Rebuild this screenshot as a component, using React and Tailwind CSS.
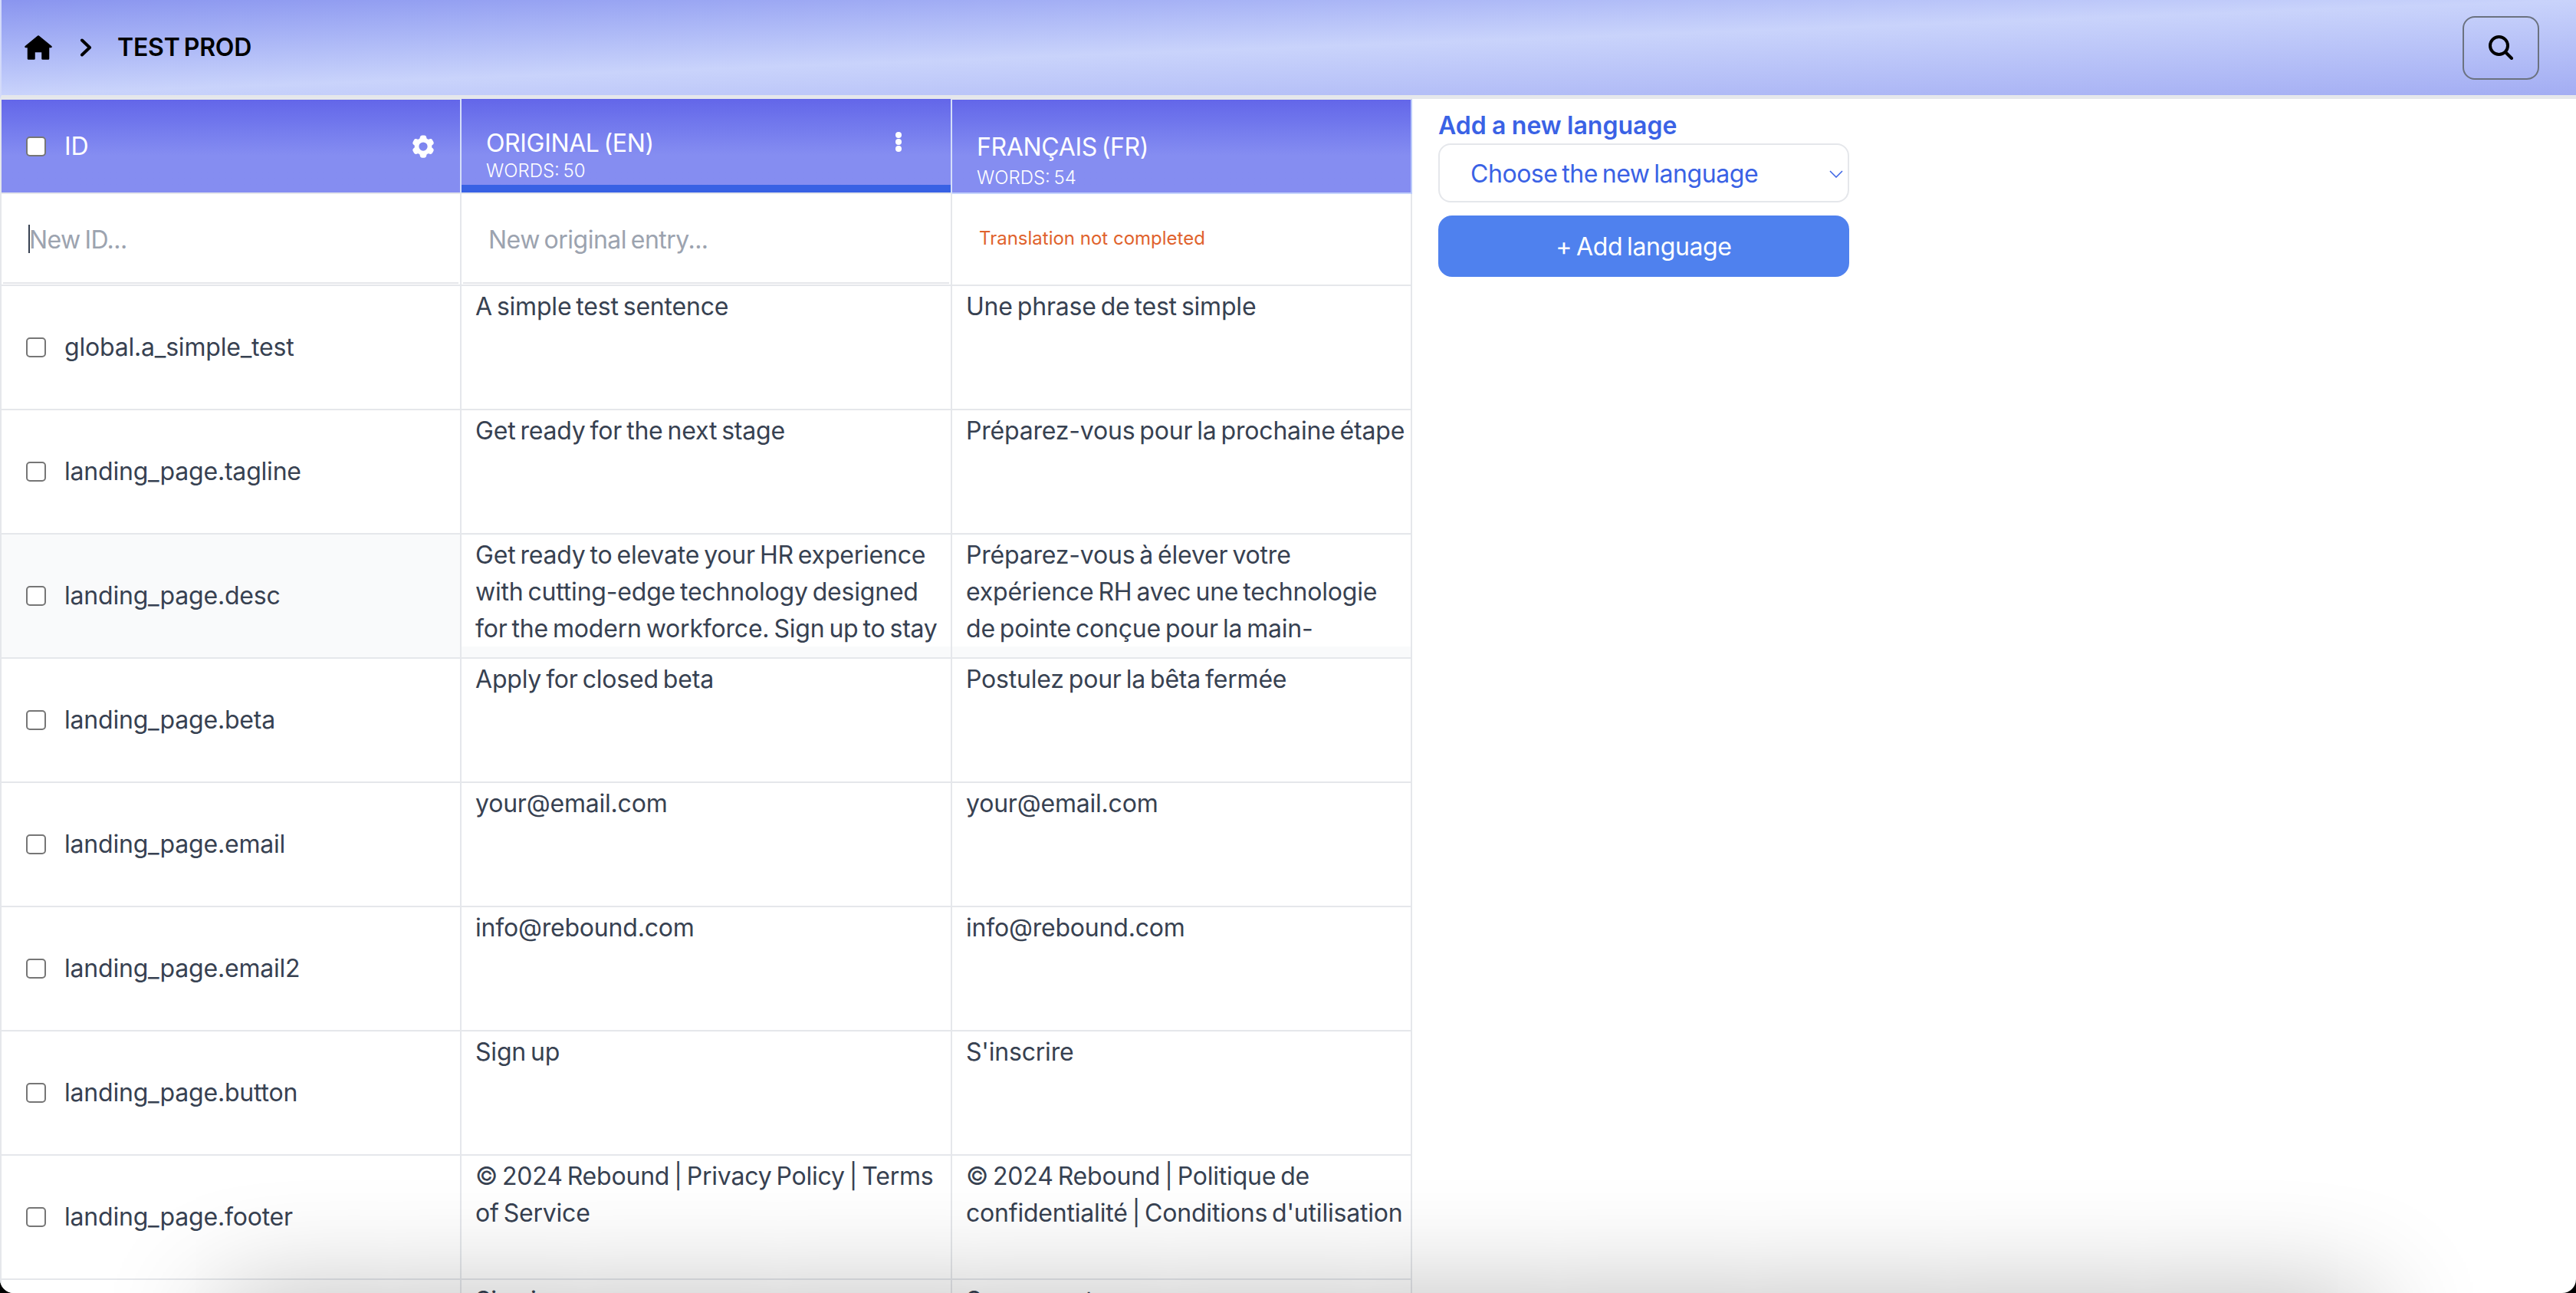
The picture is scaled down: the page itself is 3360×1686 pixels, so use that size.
import { HiCog6Tooth } from 'react-icons/hi2'

const rows = [
  { id: 'global.a_simple_test', en: 'A simple test sentence', fr: 'Une phrase de test simple' },
  { id: 'landing_page.tagline', en: 'Get ready for the next stage', fr: 'Préparez-vous pour la prochaine étape' },
  {
    id: 'landing_page.desc',
    en: 'Get ready to elevate your HR experience with cutting-edge technology designed for the modern workforce. Sign up to stay',
    fr: "Préparez-vous à élever votre expérience RH avec une technologie de pointe conçue pour la main-",
    hover: true,
  },
  { id: 'landing_page.beta', en: 'Apply for closed beta', fr: 'Postulez pour la bêta fermée' },
  { id: 'landing_page.email', en: 'your@email.com', fr: 'your@email.com' },
  { id: 'landing_page.email2', en: 'info@rebound.com', fr: 'info@rebound.com' },
  { id: 'landing_page.button', en: 'Sign up', fr: "S'inscrire" },
  {
    id: 'landing_page.footer',
    en: '© 2024 Rebound | Privacy Policy | Terms of Service',
    fr: "© 2024 Rebound | Politique de confidentialité | Conditions d'utilisation",
  },
  { id: 'landing_page.signin', en: 'Sign in', fr: 'Se connecter' },
]

function Checkbox() {
  return (
    <input
      type="checkbox"
      className="h-[26px] w-[26px] shrink-0 appearance-none rounded-[5px] border-2 border-[#767676] bg-white"
    />
  )
}

function HomeIcon() {
  return (
    <svg width="36" height="32" viewBox="0 0 36 32" aria-hidden>
      <path
        d="M18 1.5 L34.5 15 H31 V30.5 H23.5 V22 Q23.5 21 22.5 21 H13.5 Q12.5 21 12.5 22 V30.5 H5 V15 H1.5 Z"
        fill="#000"
        stroke="#000"
        strokeWidth="2.5"
        strokeLinejoin="round"
      />
    </svg>
  )
}

function Row({ row }) {
  return (
    <div
      className={`grid h-[162px] grid-cols-[600px_640px_600px] border-b-2 border-[#e5e7eb] text-[32px] leading-[48px] text-[#374151] ${
        row.hover ? 'bg-[#f9fafb]' : 'bg-white'
      }`}
    >
      <div className="flex items-center gap-[24px] border-r-2 border-[#e5e7eb] pl-[32px]">
        <Checkbox />
        <span>{row.id}</span>
      </div>
      <div className="border-r-2 border-[#e5e7eb]">
        <div className="mt-[1px] h-[145px] overflow-hidden bg-white pt-[2px] pr-[14px] pl-[18px]">{row.en}</div>
      </div>
      <div className="border-r-2 border-[#e5e7eb]">
        <div className="mt-[1px] h-[145px] overflow-hidden bg-white pt-[2px] pr-[4px] pl-[18px]">{row.fr}</div>
      </div>
    </div>
  )
}

export default function App() {
  return (
    <div className="h-[1686px] w-[3360px] bg-black font-[Inter,sans-serif] tracking-[-0.2px] [word-spacing:-2.8px]">
      <div className="relative h-full w-full overflow-hidden rounded-b-[18px] bg-white">
        <header className="flex h-[129px] items-center justify-between border-b-[5px] border-l-2 border-[#e5e7eb] border-l-[#d3daf9] bg-linear-to-br from-[#8a95ef] via-[#c9d3fb] to-[#a3adf3] pr-[48px] pl-[30px]">
          <div className="flex items-center">
            <HomeIcon />
            <svg width="16" height="24" viewBox="0 0 16 24" className="ml-[36px]" aria-hidden>
              <polyline
                points="3,2.5 13,12 3,21.5"
                fill="none"
                stroke="#000"
                strokeWidth="4"
                strokeLinecap="round"
                strokeLinejoin="round"
              />
            </svg>
            <span className="ml-[33px] text-[32px] leading-[48px] font-semibold text-black">TEST PROD</span>
          </div>
          <button
            type="button"
            className="flex h-[83px] w-[100px] items-center justify-center rounded-[16px] border-2 border-[#6b7280]"
          >
            <svg width="32" height="32" viewBox="0 0 32 32" aria-hidden>
              <circle cx="13.5" cy="13.5" r="11.5" fill="none" stroke="#000" strokeWidth="4" />
              <line x1="22" y1="22" x2="30" y2="30" stroke="#000" strokeWidth="4" strokeLinecap="round" />
            </svg>
          </button>
        </header>

        <div className="flex">
          <div className="w-[1842px] shrink-0 border-l-2 border-[#e5e7eb]">
            <div className="grid h-[124px] grid-cols-[600px_640px_600px] bg-white">
              <div className="flex items-center border-t border-r-2 border-b-2 border-[#e5e7eb] border-r-[#d5def9] bg-linear-to-b from-[#6366e9] to-[#858df1] to-60% pr-[30px] pl-[32px] text-white">
                <Checkbox />
                <span className="ml-[24px] text-[32px] leading-[48px]">ID</span>
                <HiCog6Tooth className="ml-auto text-[36px]" />
              </div>
              <div className="relative border-r-2 border-b-2 border-[#e5e7eb] border-r-[#d5def9] bg-linear-to-b from-[#6366e9] to-[#858df1] to-60% pt-[38px] pl-[32px] text-white">
                <div className="text-[32px] leading-[40px] tracking-[-0.35px]">ORIGINAL (EN)</div>
                <div className="text-[24px] leading-[32px] font-light tracking-normal [word-spacing:-2px]">WORDS: 50</div>
                <svg
                  width="8"
                  height="26"
                  viewBox="0 0 8 26"
                  className="absolute top-[43px] right-[64px]"
                  fill="#fff"
                  aria-hidden
                >
                  <circle cx="4" cy="4" r="4" />
                  <circle cx="4" cy="13" r="4" />
                  <circle cx="4" cy="22" r="4" />
                </svg>
                <div className="absolute right-0 bottom-0 left-0 h-[10px] bg-[#3861e4]" />
              </div>
              <div className="border-t border-r-2 border-b-2 border-[#e5e7eb] border-r-[#b9c9fa] border-b-[#c5d3fb] bg-linear-to-b from-[#6366e9] to-[#858df1] to-60% pt-[42px] pl-[32px] text-white">
                <div className="text-[32px] leading-[40px] tracking-[-0.35px]">FRANÇAIS (FR)</div>
                <div className="mt-[4px] text-[24px] leading-[32px] font-light tracking-normal [word-spacing:-2px]">WORDS: 54</div>
              </div>
            </div>

            <div className="grid h-[120px] grid-cols-[600px_640px_600px] border-b-2 border-[#e5e7eb] bg-white text-[32px]">
              <div className="relative border-r-2 border-[#e5e7eb] px-[2px]">
                <input
                  placeholder="New ID..."
                  className="h-[117px] w-full border-b-2 border-[#e5e7eb] bg-white pt-[4px] pl-[34px] leading-[48px] tracking-[-0.55px] [word-spacing:-2.8px] outline-none placeholder:text-[#9ca3af]"
                />
                <div className="absolute top-[40px] left-[35px] h-[37px] w-[2px] bg-[#374151]" />
              </div>
              <div className="border-r-2 border-[#e5e7eb] px-[2px]">
                <input
                  placeholder="New original entry..."
                  className="h-[117px] w-full border-b-2 border-[#e5e7eb] bg-white pt-[4px] pl-[33px] leading-[48px] tracking-[-0.5px] [word-spacing:-2.8px] outline-none placeholder:text-[#9ca3af]"
                />
              </div>
              <div className="flex items-center border-r-2 border-[#e5e7eb] pb-[2px] pl-[35px] text-[24px] tracking-normal text-[#e0622c] [word-spacing:normal]">
                Translation not completed
              </div>
            </div>

            {rows.map((row) => (
              <Row key={row.id} row={row} />
            ))}
          </div>

          <div className="ml-[34px] w-[536px] shrink-0 pt-[15px]">
            <h2 className="text-[32px] leading-[40px] font-semibold tracking-normal text-[#3a62e5] [word-spacing:-0.7px]">
              Add a new language
            </h2>
            <div className="relative mt-[3px]">
              <select className="h-[77px] w-full appearance-none rounded-[16px] border-2 border-[#e5e7eb] bg-white pt-[2px] pl-[40px] text-[32px] tracking-[-0.45px] text-[#3a62e5] [word-spacing:-2.8px] outline-none">
                <option>Choose the new language</option>
              </select>
              <svg
                width="18"
                height="10"
                viewBox="0 0 18 10"
                className="pointer-events-none absolute top-[35px] right-[8px]"
                aria-hidden
              >
                <polyline points="1,1 9,9 17,1" fill="none" stroke="#3a62e5" strokeWidth="1.5" />
              </svg>
            </div>
            <button
              type="button"
              className="mt-[17px] h-[80px] w-full rounded-[18px] bg-[#4f81ee] pt-[2px] text-[32px] tracking-[-0.35px] text-white [word-spacing:-2.8px]"
            >
              + Add language
            </button>
          </div>
        </div>

        <div className="pointer-events-none absolute top-[1695px] left-[285px] z-10 h-[200px] w-[2805px] shadow-[0_0_150px_0_rgba(0,0,0,0.3)]" />
      </div>
    </div>
  )
}
